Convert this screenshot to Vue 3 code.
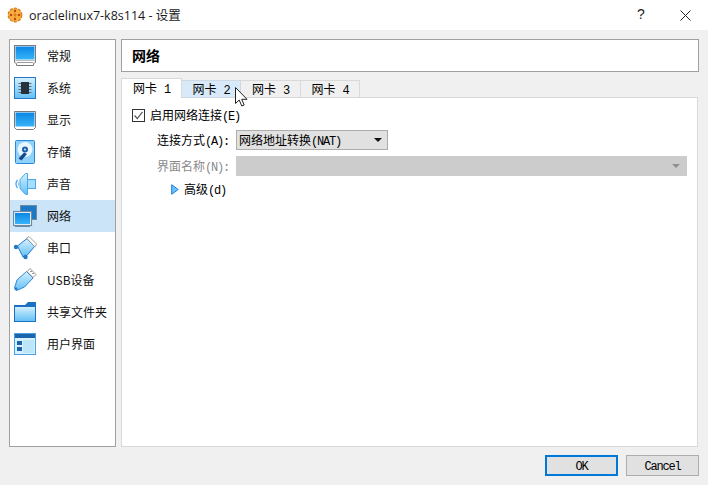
<script setup>
const items = [
  { key: 'general', label: '常规' },
  { key: 'system', label: '系统' },
  { key: 'display', label: '显示' },
  { key: 'storage', label: '存储' },
  { key: 'audio', label: '声音' },
  { key: 'network', label: '网络', active: true },
  { key: 'serial', label: '串口' },
  { key: 'usb', label: 'USB设备' },
  { key: 'shared', label: '共享文件夹' },
  { key: 'ui', label: '用户界面' }
]
const tabs = [
  { label: '网卡', num: '1', cls: 'current' },
  { label: '网卡', num: '2', cls: 'hover' },
  { label: '网卡', num: '3', cls: 'wide' },
  { label: '网卡', num: '4', cls: '' }
]
</script>

<template>
  <div class="window">
    <svg class="defs" width="0" height="0">
      <defs>
        <linearGradient id="screen" x1="0" y1="0" x2="0" y2="1">
          <stop offset="0" stop-color="#0a86e4" />
          <stop offset="1" stop-color="#38b4f8" />
        </linearGradient>
        <linearGradient id="sky" x1="0" y1="0" x2="0" y2="1">
          <stop offset="0" stop-color="#d6f1fe" />
          <stop offset="1" stop-color="#62bff6" />
        </linearGradient>
      </defs>
    </svg>

    <header class="titlebar">
      <svg class="appicon" width="16" height="16" viewBox="0 0 16 16">
        <circle cx="8" cy="8" r="6.800" fill="#f4a838" stroke="#d87818" stroke-width="1.200" stroke-dasharray="3 1.400" />
        <circle cx="8" cy="8" r="5.600" fill="#f8b040" />
        <circle cx="8" cy="8" r="1.700" fill="#e8801c" />
        <circle cx="8" cy="4" r="1.200" fill="#b04a14" />
        <circle cx="8" cy="12" r="1.200" fill="#b04a14" />
        <circle cx="4" cy="8" r="1.200" fill="#b04a14" />
        <circle cx="12" cy="8" r="1.200" fill="#b04a14" />
      </svg>
      <span class="title">oraclelinux7-k8s114 - 设置</span>
      <span class="help">?</span>
      <svg class="close" width="11" height="11" viewBox="0 0 11 11">
        <path d="M0.500 0.500 10.500 10.500M10.500 0.500 0.500 10.500" stroke="#222" stroke-width="1" fill="none" />
      </svg>
    </header>

    <div class="body">
      <div class="main">
        <nav class="sidebar">
          <div v-for="it in items" :key="it.key" class="item" :class="{ active: it.active }">
            <span class="icon">
              <svg width="24" height="24" viewBox="0 0 24 24">
                <template v-if="it.key === 'general'">
                  <rect x="1.500" y="1.500" width="21" height="15" fill="#fff" stroke="#7a7a7a" />
                  <rect x="2.500" y="2.500" width="19" height="13" fill="url(#screen)" />
                  <path d="M1.500 16.500V18.500L3.500 19.500V21.500H20.500V19.500L22.500 18.500V16.500" fill="#fff" stroke="#7a7a7a" />
                  <path d="M4 18.500H20" stroke="#9a9a9a" />
                </template>
                <template v-else-if="it.key === 'system'">
                  <rect x="1.500" y="1.500" width="21" height="21" fill="url(#sky)" stroke="#2478c8" />
                  <rect x="8" y="6" width="8" height="12" fill="#28303c" />
                  <path d="M5.500 7.500H8M5.500 10.500H8M5.500 13.500H8M5.500 16.500H8M16 7.500H18.500M16 10.500H18.500M16 13.500H18.500M16 16.500H18.500" stroke="#5c6c7c" />
                </template>
                <template v-else-if="it.key === 'display'">
                  <path d="M1.500 3.500H22.500V19.500L20.500 21.500H3.500L1.500 19.500z" fill="#fff" stroke="#7a7a7a" />
                  <rect x="2.500" y="4.500" width="19" height="14" fill="url(#screen)" />
                </template>
                <template v-else-if="it.key === 'storage'">
                  <rect x="2.500" y="0.500" width="19" height="23" rx="1" fill="#8ed2fa" stroke="#2a88d8" />
                  <circle cx="12" cy="9.500" r="7.500" fill="#e8f7ff" />
                  <circle cx="12" cy="9.500" r="3" fill="#1a5fa8" />
                  <circle cx="12" cy="9.500" r="1" fill="#d6f1fe" />
                  <path d="M5.500 18.500 11 12.500l3 1.500-5.500 6.500z" fill="#144a88" />
                </template>
                <template v-else-if="it.key === 'audio'">
                  <path d="M14.500 1.500H12.500L7 7.500V16.500L12.500 22.500H14.500z" fill="url(#sky)" stroke="#4aa8ec" />
                  <rect x="14.500" y="7.500" width="8" height="9" fill="#a4defc" stroke="#4aa8ec" />
                  <path d="M4.500 8Q1.500 12 4.500 16" fill="none" stroke="#4aa8ec" stroke-width="1.300" />
                  <path d="M6 10Q5 12 6 14" fill="none" stroke="#7cc4f4" />
                </template>
                <template v-else-if="it.key === 'network'">
                  <rect x="7.500" y="1.500" width="16" height="14" fill="#1a78c4" stroke="#6e8aa2" />
                  <rect x="0.500" y="7.500" width="18" height="14" fill="#eef6fc" stroke="#6e8aa2" stroke-width="1.200" />
                  <rect x="2" y="9" width="15" height="11" fill="url(#screen)" />
                  <rect x="2" y="21" width="15" height="2" fill="#6e8aa2" />
                </template>
                <template v-else-if="it.key === 'serial'">
                  <path d="M4.500 10 14 2.500 21.500 10.500 14 19.500 10 21z" fill="url(#sky)" stroke="#2478c8" />
                  <path d="M13.500 2 16 0.500 23.500 8 22 11z" fill="#fff" stroke="#8a8a8a" stroke-width=".8" />
                  <circle cx="3" cy="11" r="2.200" fill="#2478c8" />
                  <circle cx="12.500" cy="21" r="2.200" fill="#2478c8" />
                </template>
                <template v-else-if="it.key === 'usb'">
                  <path d="M3.500 22.500 1.500 20 4 12 13.500 3.500 20 10 11.500 19z" fill="url(#sky)" stroke="#2a88d8" />
                  <path d="M14 3.500 17 0.500 23 6.500 20 9.500z" fill="#fff" stroke="#7a7a7a" stroke-width=".8" />
                  <path d="M17.500 3 18.500 4M19.500 5 20.500 6" stroke="#333" />
                  <circle cx="3" cy="21" r="1.400" fill="#2a78c8" />
                </template>
                <template v-else-if="it.key === 'shared'">
                  <path d="M1 7V5L12 5 15 2H23V7z" fill="#1c70c0" />
                  <rect x="1.500" y="6.500" width="21" height="15" fill="url(#sky)" stroke="#1c70c0" />
                </template>
                <template v-else>
                  <rect x="1.500" y="1.500" width="21" height="21" fill="#d8f1fe" stroke="#4aa0e0" />
                  <rect x="2" y="2" width="20" height="4" fill="#1c64ac" />
                  <rect x="4" y="9" width="5" height="4" fill="#1c64ac" />
                  <rect x="4" y="15" width="5" height="4" fill="#1c64ac" />
                  <rect x="10" y="8" width="11" height="13" fill="#bce6fc" />
                </template>
              </svg>
            </span>
            <span class="item-label">{{ it.label }}</span>
          </div>
        </nav>

        <section class="content">
          <div class="heading">网络</div>

          <div class="tabs">
            <div v-for="t in tabs" :key="t.num" class="tab" :class="t.cls">
              {{ t.label }}<span class="m num">{{ t.num }}</span>
            </div>
          </div>

          <div class="panel">
            <label class="check-row">
              <span class="checkbox">
                <svg width="11" height="11" viewBox="0 0 11 11">
                  <path d="M1.500 5.500 4.300 8.500 9.500 1.800" fill="none" stroke="#555" stroke-width="1.200" />
                </svg>
              </span>
              <span>启用网络连接<span class="m">(E)</span></span>
            </label>

            <div class="form-row first">
              <span class="form-label">连接方式<span class="m">(A):</span></span>
              <div class="select">
                <span>网络地址转换<span class="m">(NAT)</span></span>
                <span class="caret"></span>
              </div>
            </div>

            <div class="form-row disabled">
              <span class="form-label">界面名称<span class="m">(N):</span></span>
              <div class="select wide">
                <span class="caret faded"></span>
              </div>
            </div>

            <div class="advanced">
              <svg width="8" height="11" viewBox="0 0 8 11">
                <path d="M0.700 0.700 7.200 5.500 0.700 10.300z" fill="#6cc0f8" stroke="#1c80d8" stroke-width="1" />
              </svg>
              <span>高级<span class="m">(d)</span></span>
            </div>
          </div>
        </section>
      </div>

      <footer class="footer">
        <button class="btn primary"><span class="m">OK</span></button>
        <button class="btn"><span class="m">Cancel</span></button>
      </footer>
    </div>

    <svg class="cursor" width="13" height="20" viewBox="0 0 13 20">
      <path d="M0.500 0.500V16.500L4.200 13 6.800 19 9.200 18 6.700 12.300H12z" fill="#fff" stroke="#222" stroke-width="1" />
    </svg>
  </div>
</template>

<style scoped>
.window {
  position: relative;
  width: 708px;
  height: 485px;
  display: flex;
  flex-direction: column;
  background: #f0f0f0;
  overflow: hidden;
  font-family: "Noto Sans CJK SC", sans-serif;
  font-size: 12px;
  color: #000;
}
.defs { position: absolute; }
.m {
  font-family: "Liberation Mono", monospace;
  font-size: 12px;
  letter-spacing: -1.200px;
}
.titlebar {
  height: 30px;
  flex: none;
  display: flex;
  align-items: center;
  padding-left: 7px;
  background: #fff;
}
.appicon { flex: none; }
.title {
  margin-left: 6px;
  padding-bottom: 2px;
  flex: 1;
  font-family: "Open Sans", "Noto Sans CJK SC", sans-serif;
  font-size: 12.500px;
  color: #1a1a1a;
}
.help {
  width: 20px;
  margin-right: 29px;
  padding-bottom: 2px;
  font-family: "Liberation Sans", sans-serif;
  font-size: 14px;
  text-align: center;
  color: #222;
}
.close { margin-right: 17px; }
.body {
  flex: 1;
  min-height: 0;
  display: flex;
  flex-direction: column;
  padding: 9px;
}
.main {
  flex: 1;
  min-height: 0;
  display: flex;
  gap: 5px;
}
.sidebar {
  width: 107px;
  flex: none;
  box-sizing: border-box;
  background: #fff;
  border: 1px solid #a0a0a0;
}
.item {
  height: 32px;
  display: flex;
  align-items: center;
  padding-left: 3px;
}
.item.active { background: #cce4f7; }
.icon {
  width: 24px;
  height: 24px;
  flex: none;
  display: block;
}
.icon svg { display: block; }
.item-label {
  margin-left: 10px;
  font-size: 12px;
  line-height: 32px;
  color: #111;
  white-space: nowrap;
}
.content {
  flex: 1;
  min-width: 0;
  display: flex;
  flex-direction: column;
}
.heading {
  height: 33px;
  box-sizing: border-box;
  padding-left: 10px;
  background: #fff;
  border: 1px solid #a0a0a0;
  font-size: 14px;
  font-weight: 700;
  line-height: 30px;
}
.tabs {
  display: flex;
  height: 19px;
  margin-top: 6px;
  position: relative;
  z-index: 1;
  align-items: flex-start;
}
.tab {
  height: 18px;
  width: 59px;
  margin-top: 2px;
  box-sizing: border-box;
  border: 1px solid #d9d9d9;
  border-left: 0;
  background: #f0f0f0;
  text-align: center;
  line-height: 15px;
  font-size: 12px;
  white-space: nowrap;
}
.tab.wide { width: 60px; }
.tab.current {
  height: 20px;
  width: 61px;
  margin-top: 0;
  background: #fff;
  border-left: 1px solid #d9d9d9;
  border-bottom: 0;
  line-height: 17px;
}
.tab.hover {
  background: #d8eafa;
  border-color: #cfd8e0;
}
.num { margin-left: 7px; }
.panel {
  flex: 1;
  box-sizing: border-box;
  background: #fff;
  border: 1px solid #d9d9d9;
  margin-right: 1px;
  padding: 9px 10px 0 10px;
}
.check-row {
  display: flex;
  align-items: center;
  height: 18px;
  gap: 5px;
  margin-top: -1px;
}
.checkbox {
  width: 13px;
  height: 13px;
  box-sizing: border-box;
  border: 1px solid #333;
  display: flex;
  align-items: center;
  justify-content: center;
  background: #fff;
}
.form-row {
  display: flex;
  align-items: center;
  height: 20px;
  margin-top: 6px;
  padding-left: 25px;
}
.form-label {
  width: 79px;
  flex: none;
  white-space: nowrap;
}
.disabled .form-label { color: #8a8a8a; }
.select {
  width: 152px;
  height: 20px;
  box-sizing: border-box;
  display: flex;
  align-items: center;
  justify-content: space-between;
  padding: 0 4px 0 2px;
  background: #e1e1e1;
  border: 1px solid #adadad;
  white-space: nowrap;
}
.select.wide {
  flex: 1;
  justify-content: flex-end;
  background: #cccccc;
  border-color: #cccccc;
  padding-right: 5px;
}
.caret {
  width: 0;
  height: 0;
  margin-right: 1px;
  border-left: 4px solid transparent;
  border-right: 4px solid transparent;
  border-top: 4px solid #111;
}
.caret.faded { border-top-color: #8f8f8f; }
.advanced {
  display: flex;
  align-items: center;
  height: 18px;
  margin-top: 4px;
  padding-left: 39px;
  gap: 5px;
}
.footer {
  flex: none;
  display: flex;
  justify-content: flex-end;
  gap: 8px;
  margin-top: 8px;
}
.btn {
  width: 73px;
  height: 21px;
  box-sizing: border-box;
  background: #e1e1e1;
  border: 1px solid #adadad;
  color: #000;
  padding: 0;
}
.btn.primary { border: 2px solid #0078d7; }
.cursor {
  position: absolute;
  z-index: 2;
  left: 235px;
  top: 87px;
}
</style>
